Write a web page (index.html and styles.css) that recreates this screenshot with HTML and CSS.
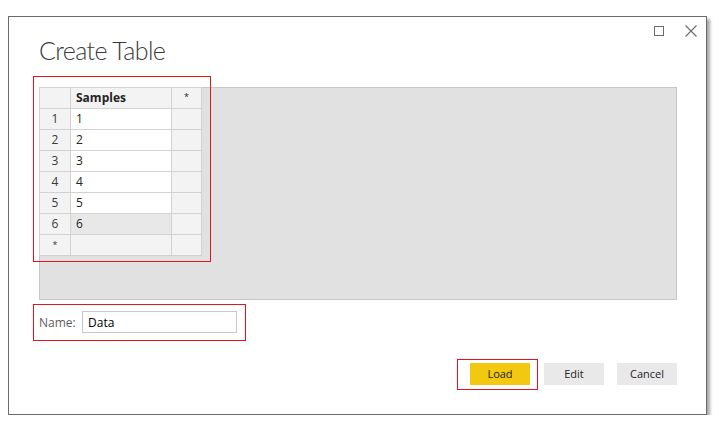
FILE: index.html
```html
<!DOCTYPE html>
<html lang="en">
<head>
  <meta charset="UTF-8">
  <title>Create Table</title>
  <link rel="stylesheet" href="styles.css">
</head>
<body>
  <div class="dialog">
    <div class="head">
      <h1 class="title">Create Table</h1>
      <div class="controls">
        <span class="ctl-max"></span>
        <svg class="ctl-close" width="12" height="12" viewBox="0 0 12 12">
          <path d="M0.5 0.5 L11.5 11.5 M11.5 0.5 L0.5 11.5" stroke="#6a6a6a" stroke-width="1.1" fill="none"/>
        </svg>
      </div>
    </div>

    <div class="grid-area">
      <table class="sheet">
        <tr class="hdr"><th class="num"></th><th class="col">Samples</th><th class="add">*</th></tr>
        <tr><td class="num">1</td><td class="val">1</td><td class="add"></td></tr>
        <tr><td class="num">2</td><td class="val">2</td><td class="add"></td></tr>
        <tr><td class="num">3</td><td class="val">3</td><td class="add"></td></tr>
        <tr><td class="num">4</td><td class="val">4</td><td class="add"></td></tr>
        <tr><td class="num">5</td><td class="val">5</td><td class="add"></td></tr>
        <tr class="sel"><td class="num">6</td><td class="val">6</td><td class="add"></td></tr>
        <tr class="new"><td class="num">*</td><td class="val"></td><td class="add"></td></tr>
      </table>
      <span class="mark mark-table"></span>
    </div>

    <div class="name-row">
      <label class="name-label" for="name">Name:</label>
      <input class="name-input" id="name" type="text" value="Data">
      <span class="mark mark-name"></span>
    </div>

    <div class="actions">
      <div class="btn-wrap">
        <button class="btn btn-load">Load</button>
        <span class="mark mark-load"></span>
      </div>
      <button class="btn">Edit</button>
      <button class="btn">Cancel</button>
    </div>
  </div>
</body>
</html>
```

FILE: styles.css
```css
body {
  margin: 0;
  background: #fff;
  font-family: 'Open Sans', 'Noto Sans', sans-serif;
  color: #252423;
}
.dialog {
  box-sizing: border-box;
  width: 699px;
  height: 399px;
  margin: 16px 0 0 8px;
  padding: 0 29px 0 30px;
  border: 1px solid #6b6b6b;
  background: #fff;
  box-shadow: 3px 3px 3px rgba(0, 0, 0, 0.35);
}
.head {
  display: flex;
  justify-content: space-between;
  align-items: flex-start;
}
.title {
  margin: 16px 0 0;
  font-family: 'Lato', 'Open Sans', sans-serif;
  font-size: 25px;
  line-height: 34px;
  letter-spacing: -0.6px;
  font-weight: 300;
  color: #3b3a39;
}
.controls {
  display: flex;
  align-items: center;
  gap: 21px;
  margin: 8px -20px 0 0;
}
.ctl-max {
  width: 10px;
  height: 10px;
  box-sizing: border-box;
  border: 1px solid #6a6a6a;
}
.grid-area {
  position: relative;
  box-sizing: border-box;
  height: 213px;
  margin-top: 20px;
  background: #e1e1e1;
  border: 1px solid #c8c8c8;
}
.sheet {
  margin: -1px 0 0 -1px;
  border-collapse: collapse;
  font-size: 12px;
}
.sheet th, .sheet td {
  height: 20px;
  padding: 0;
  border: 1px solid #d2d2d2;
  background: #fff;
  line-height: 18px;
}
.sheet .num { width: 30px; text-align: center; background: #f3f3f3; color: #3b3a39; }
.sheet .val { width: 95px; padding-left: 5px; }
.sheet .col { width: 95px; padding-left: 5px; text-align: left; font-weight: 700; background: #f3f3f3; }
.sheet .add { width: 29px; text-align: center; background: #f3f3f3; font-weight: 400; font-size: 9px; vertical-align: top; }
.sheet .hdr .num, .sheet .hdr .col, .sheet .hdr .add { background: #f3f3f3; }
.sheet .sel .val { background: #e8e8e8; }
.sheet .new .val { background: #f3f3f3; }
.sheet .new .num { font-size: 9px; }
.mark {
  position: absolute;
  box-sizing: border-box;
  border: 1px solid #e3141e;
  pointer-events: none;
}
.mark-table { left: -7px; top: -12px; width: 178px; height: 186px; }
.name-row {
  position: relative;
  display: flex;
  align-items: center;
  margin-top: 11px;
  height: 22px;
}
.name-label {
  width: 43px;
  font-size: 12px;
  color: #605e5c;
}
.name-input {
  box-sizing: border-box;
  width: 155px;
  height: 22px;
  margin: 0;
  padding: 0 5px;
  border: 1px solid #c8c8c8;
  font-family: inherit;
  font-size: 12px;
  color: #000;
}
.mark-name { left: -6px; top: -7px; width: 213px; height: 37px; }
.actions {
  display: flex;
  justify-content: flex-end;
  gap: 13px;
  margin-top: 30px;
}
.btn-wrap {
  position: relative;
  margin-right: 1px;
}
.btn {
  width: 60px;
  height: 22px;
  padding: 0 0 1px;
  border: none;
  background: #e9e9e9;
  font-family: inherit;
  font-size: 11px;
  line-height: 20px;
  color: #252423;
}
.btn-load { display: block; background: #f2c811; }
.mark-load { left: -13px; top: -4px; width: 81px; height: 31px; }
```
